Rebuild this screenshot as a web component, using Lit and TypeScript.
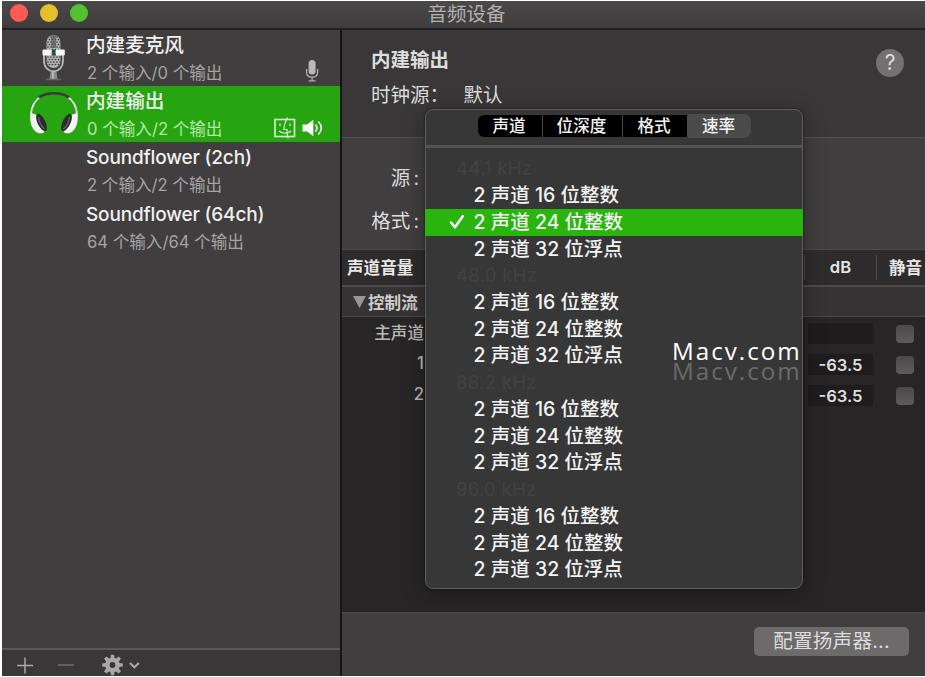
import { LitElement, html, svg, css, nothing } from "lit";
import { customElement, property } from "lit/decorators.js";
import { classMap } from "lit/directives/class-map.js";

const baseText = css`
  * {
    box-sizing: border-box;
  }
  :host {
    font-family: Inter, "Noto Sans CJK SC", sans-serif;
    white-space: nowrap;
  }
  svg {
    display: block;
    flex: none;
  }
`;

interface Device {
  name: string;
  detail: string;
  art?: "mic" | "headphones";
  badges?: "input" | "output";
  selected?: boolean;
  latin?: boolean;
}

const devices: Device[] = [
  { name: "内建麦克风", detail: "2 个输入/0 个输出", art: "mic", badges: "input" },
  { name: "内建输出", detail: "0 个输入/2 个输出", art: "headphones", badges: "output", selected: true },
  { name: "Soundflower (2ch)", detail: "2 个输入/2 个输出", latin: true },
  { name: "Soundflower (64ch)", detail: "64 个输入/64 个输出", latin: true },
];

const rates = ["44.1 kHz", "48.0 kHz", "88.2 kHz", "96.0 kHz"];
const formats = ["2 声道 16 位整数", "2 声道 24 位整数", "2 声道 32 位浮点"];
const tabs = ["声道", "位深度", "格式", "速率"];

const meshDots = Array.from({ length: 12 }, (_, r) =>
  Array.from({ length: 7 }, (_, c) => ({ x: 3 + c * 3 + (r % 2) * 1.5, y: 3 + r * 2.5 }))
).flat();

const studioMic = html`<svg width="24" height="48" viewBox="0 0 24 48">
  <defs>
    <clipPath id="capsule"><rect x="4.5" y="1" width="14" height="33" rx="7" /></clipPath>
  </defs>
  <rect x="4.5" y="1" width="14" height="33" rx="7" fill="#b4b4b4" />
  <g clip-path="url(#capsule)" fill="#3d3d3d">
    ${meshDots.map((d) => svg`<circle cx=${d.x} cy=${d.y} r="0.85" />`)}
    <rect x="9" y="0" width="5" height="14" fill="#4a4a4a" opacity=".55" />
  </g>
  <path d="M2 21v6c0 6 4 10 9.500 10.500C17 37 21 33 21 27v-6" fill="none" stroke="#b9b9b9" stroke-width="1.800" />
  <rect x=".5" y="15.500" width="9" height="6" rx="1" fill="#f6f6f6" />
  <rect x="13.800" y="15.500" width="9" height="6" rx="1" fill="#f6f6f6" />
  <rect x="10" y="15.500" width="3.400" height="6" fill="#2e4a4d" />
  <path d="M8.500 38h6l1 7h-8z" fill="#8b8b8b" />
  <path d="M11 38v7" stroke="#ddd" stroke-width="1" />
  <path d="M4 45.500h15" stroke="#666" stroke-width="1.500" />
</svg>`;

const headphones = html`<svg width="50" height="44" viewBox="0 0 50 44">
  <path d="M4 33C-1.500 18 6 2.500 25 2.300 44 2.500 51.500 18 46 33" fill="none" stroke="#f4f4f4" stroke-width="1.700" />
  <path d="M10 6.500C18 1 32 1 40 6.500" fill="none" stroke="#3b3b3b" stroke-width="2.800" />
  <path d="M2 22c-1.500 7-.5 13 3.500 17.500 3 3.500 8 3.500 10 1.500L8 24z" fill="#f5f5f5" />
  <path d="M48 22c1.500 7 .5 13-3.500 17.500-3 3.500-8 3.500-10 1.500L42 24z" fill="#f5f5f5" />
  <ellipse cx="12.500" cy="31.500" rx="3.900" ry="9.500" transform="rotate(-26 12.500 31.500)" fill="#2b2b2b" />
  <ellipse cx="37.500" cy="31.500" rx="3.900" ry="9.500" transform="rotate(26 37.500 31.500)" fill="#2b2b2b" />
  <path d="M9.500 26c.5 5 2.500 9 6 12M40.500 26c-.5 5-2.500 9-6 12" stroke="#686868" stroke-width="1.200" fill="none" />
</svg>`;

const smallMic = html`<svg width="14" height="24" viewBox="0 0 14 24">
  <rect x="3.600" y="1" width="7" height="14.500" rx="3.500" fill="#b9b8b8" />
  <path d="M1.600 10v3c0 3.500 2.300 5.200 5.500 5.200s5.500-1.700 5.500-5.200v-3M7.100 18v3.600M3.600 21.800h7" fill="none" stroke="#b1b0b0" stroke-width="1.300" />
</svg>`;

const finderIcon = html`<svg width="22" height="22" viewBox="0 0 22 22" fill="none" stroke="#d9f7d2">
  <rect x="1" y="2.500" width="19.500" height="17" stroke-width="1.600" />
  <path d="M13.500 0.500C11 5 10 8.500 9.800 12.500h3.200c-.2 3 .2 6 1.200 9" stroke-width="1.100" />
  <path d="M6 6.500v2.500M16 6.500v2.500M5 14c3.500 3 8.500 3 12 0" stroke-width="1.200" />
</svg>`;

const speaker = html`<svg width="22" height="18" viewBox="0 0 22 18">
  <path d="M.5 5.500h4.700L11.300.8v16.400L5.200 12.500H.5z" fill="#fff" />
  <path d="M13.700 6c1.600 1.800 1.600 4.200 0 6M16.600 3c3.600 3.600 3.600 8.400 0 12" fill="none" stroke="#fff" stroke-width="1.600" stroke-linecap="round" />
</svg>`;

@customElement("device-row")
class DeviceRow extends LitElement {
  @property({ attribute: false }) device!: Device;

  static styles = [
    baseText,
    css`
      :host {
        display: block;
      }
      .row {
        height: 56.2px;
        display: grid;
        grid-template-columns: 84px 1fr auto;
        color: #f1f0f0;
      }
      .selected {
        background: #26a510;
      }
      .art {
        display: flex;
        justify-content: center;
        padding: 4px 0 0 19px;
      }
      .selected .art {
        padding-top: 5px;
      }
      .words {
        padding-top: 2px;
      }
      .name {
        font-size: 19.6px;
        line-height: 27px;
        font-weight: 500;
      }
      .latin {
        font-size: 19px;
        letter-spacing: -0.17px;
      }
      .detail {
        font-size: 16.6px;
        line-height: 28px;
        color: #a5a3a4;
        padding-left: 1px;
      }
      .selected .detail {
        color: #b5e8ab;
      }
      .badges {
        display: flex;
        align-items: flex-end;
        gap: 6px;
        padding: 0 16px 4px 0;
      }
      .input {
        padding: 0 21px 4px 0;
      }
      .speaker {
        padding-bottom: 2px;
      }
    `,
  ];

  render() {
    const d = this.device;
    return html`<div class=${classMap({ row: true, selected: !!d.selected })}>
      <div class="art">${d.art === "mic" ? studioMic : d.art === "headphones" ? headphones : nothing}</div>
      <div class="words">
        <div class=${classMap({ name: true, latin: !!d.latin })}>${d.name}</div>
        <div class="detail">${d.detail}</div>
      </div>
      ${d.badges === "input"
        ? html`<div class="badges input">${smallMic}</div>`
        : d.badges === "output"
          ? html`<div class="badges">${finderIcon}<span class="speaker">${speaker}</span></div>`
          : nothing}
    </div>`;
  }
}

@customElement("format-menu")
class FormatMenu extends LitElement {
  static styles = [
    baseText,
    css`
      :host {
        display: block;
        width: 378px;
        height: 480px;
        border: 1.5px solid #5d5f5e;
        border-radius: 8px;
        background: #373737;
        box-shadow: 0 4px 22px rgba(0, 0, 0, 0.35), 0 0 2px rgba(0, 0, 0, 0.7);
        color: #f3f3f3;
      }
      .tabs {
        height: 38px;
        padding: 4px 0 0 52px;
        border-bottom: 3px solid #535353;
        display: flex;
      }
      .tab {
        height: 22px;
        margin-top: 1px;
        background: #000;
        border-right: 1px solid #4c4c4c;
        width: 65px;
        padding-right: 2px;
        font-size: 16.6px;
        line-height: 22px;
        font-weight: 500;
        text-align: center;
      }
      .tab:first-child {
        border-radius: 6px 0 0 6px;
      }
      .tab:nth-child(2) {
        width: 80px;
      }
      .tab:last-child {
        width: 63px;
        height: 24px;
        margin-top: 0;
        line-height: 24px;
        background: #4b4b4b;
        border: 0;
        border-radius: 0 7px 7px 0;
      }
      .list {
        padding-top: 7.300px;
      }
      .rate,
      .format {
        height: 26.740px;
        line-height: 26.740px;
      }
      .rate {
        padding-left: 30px;
        color: #424242;
        font-size: 18.5px;
        letter-spacing: 0.3px;
      }
      .format {
        display: flex;
        font-size: 19.5px;
        font-weight: 500;
      }
      .mark {
        width: 47.500px;
        padding: 5px 0 0 23px;
      }
      .chosen {
        background: #29b40e;
        margin: 0 -1px;
        padding-left: 1px;
      }
    `,
  ];

  render() {
    return html`
      <div class="tabs">${tabs.map((t) => html`<div class="tab">${t}</div>`)}</div>
      <div class="list">
        ${rates.map(
          (rate, i) => html`
            <div class="rate">${rate}</div>
            ${formats.map((f, j) => {
              const chosen = i === 0 && j === 1;
              return html`<div class=${classMap({ format: true, chosen })}>
                <span class="mark"
                  >${chosen
                    ? html`<svg width="16" height="16" viewBox="0 0 16 16">
                        <path d="M2 8.500l4 4.800L13.800 2.300" fill="none" stroke="#fff" stroke-width="2.500" stroke-linecap="round" stroke-linejoin="round" />
                      </svg>`
                    : nothing}</span
                >${f}
              </div>`;
            })}
          `
        )}
      </div>
    `;
  }
}

@customElement("app-root")
class AppRoot extends LitElement {
  static styles = [
    baseText,
    css`
      :host {
        display: block;
        position: relative;
        width: 925px;
        height: 677px;
        padding: 1px 0 1px 2px;
        box-sizing: border-box;
        background: #fff;
        overflow: hidden;
        color: #dedddd;
      }
      .window {
        height: 675px;
        display: flex;
        flex-direction: column;
        background: #403e3f;
      }
      .titlebar {
        height: 29px;
        flex: none;
        display: grid;
        grid-template-columns: 1fr auto 1fr;
        background: linear-gradient(#4a4848, #3e3c3d);
        border-bottom: 2px solid #232122;
      }
      .lights {
        display: flex;
        gap: 12px;
        padding: 3px 0 0 8px;
      }
      .light {
        width: 18px;
        height: 18px;
        border-radius: 50%;
      }
      .close {
        background: #fe5b54;
      }
      .minimize {
        background: #e6bf2c;
      }
      .maximize {
        background: #53c22e;
      }
      .title {
        font-size: 19.5px;
        line-height: 26px;
        color: #b3b1b2;
        padding-left: 6px;
      }
      .body {
        flex: 1;
        display: flex;
        min-height: 0;
      }
      .sidebar {
        width: 340px;
        flex: none;
        display: flex;
        flex-direction: column;
        border-right: 2px solid #151314;
      }
      .devices {
        flex: 1;
      }
      .tools {
        height: 28px;
        border-top: 2px solid #5a5859;
        background: #393738;
      }
      .main {
        flex: 1;
        min-width: 0;
        display: flex;
        flex-direction: column;
      }
      .summary {
        height: 108px;
        background: #393738;
        border-bottom: 1px solid #525051;
        display: flex;
        justify-content: space-between;
        padding: 17px 21px 0 29px;
      }
      .heading {
        font-size: 19.5px;
        font-weight: 600;
        line-height: 26px;
      }
      .clock {
        font-size: 19.5px;
        line-height: 26px;
        padding-top: 9px;
        display: flex;
      }
      .clock-label {
        width: 92.500px;
      }
      .help {
        width: 28px;
        height: 28px;
        margin-top: 2px;
        border-radius: 50%;
        background: #737172;
        text-align: center;
        font-size: 21px;
        line-height: 28px;
      }
      .fields {
        height: 111px;
        width: 77px;
        padding-top: 27px;
        font-size: 19.5px;
        line-height: 26px;
        text-align: right;
        display: flex;
        flex-direction: column;
        gap: 17px;
      }
      .colon {
        margin-left: 3px;
      }
      .head {
        height: 38px;
        background: #2d2b2c;
        border-top: 1px solid #4c4a4b;
        border-bottom: 2px solid #4d4b4c;
        display: grid;
        grid-template-columns: 462px 73px 48px;
        align-items: center;
        font-size: 16.6px;
        font-weight: 700;
        color: #e8e7e7;
      }
      .head-name {
        padding: 0 0 2px 5px;
      }
      .head-db {
        text-align: center;
        border-left: 1px solid #4c4a4b;
        border-right: 1px solid #4c4a4b;
        line-height: 25px;
        font-weight: 600;
      }
      .head-mute {
        padding: 0 0 2px 12px;
      }
      .group {
        height: 30px;
        background: #353334;
        border-bottom: 1px solid #4a4849;
        display: flex;
        align-items: center;
        gap: 2px;
        padding-left: 11px;
        font-size: 16.6px;
        font-weight: 700;
        color: #cfcece;
      }
      .channels {
        flex: 1;
        padding-top: 1px;
        background: #272526;
      }
      .channel {
        height: 31.200px;
        display: grid;
        grid-template-columns: 82px 65px 18px;
        justify-content: start;
        align-items: center;
        font-size: 16.6px;
        font-weight: 500;
      }
      .channel-name {
        text-align: right;
        color: #b9b8b8;
        padding-bottom: 3px;
      }
      .level {
        margin-left: 384px;
        width: 65px;
        height: 21px;
        line-height: 22px;
        background: #1e1c1d;
        text-align: center;
        font-weight: 600;
      }
      .box {
        margin-left: 407px;
        width: 18px;
        height: 18px;
        border-radius: 4px;
        background: linear-gradient(#4b494a, #5d5b5c);
      }
      .footer {
        height: 64px;
        border-top: 1px solid #4c4a4b;
        display: flex;
        justify-content: flex-end;
        padding: 14px 16px 0 0;
      }
      .configure {
        width: 155px;
        height: 29px;
        border-radius: 5px;
        background: #6c6a6b;
        font-size: 19.6px;
        line-height: 29px;
        text-align: center;
        letter-spacing: 0.2px;
      }
      .popover {
        position: absolute;
        left: 425px;
        top: 109px;
      }
      .watermark {
        position: absolute;
        left: 672px;
        top: 341px;
        font-family: "Open Sans", sans-serif;
        font-size: 24.200px;
        line-height: 20px;
        letter-spacing: 2px;
        color: #fff;
      }
      .echo {
        color: #6b6b6b;
      }
    `,
  ];

  render() {
    const teeth = Array.from({ length: 8 }, (_, i) => i * 45);
    return html`
      <div class="window">
        <div class="titlebar">
          <div class="lights">
            <div class="light close"></div>
            <div class="light minimize"></div>
            <div class="light maximize"></div>
          </div>
          <div class="title">音频设备</div>
        </div>
        <div class="body">
          <div class="sidebar">
            <div class="devices">${devices.map((d) => html`<device-row .device=${d}></device-row>`)}</div>
            <div class="tools">
              <svg width="160" height="26" viewBox="0 0 160 26" fill="none">
                <path d="M15 15.500h16M23 7.500v16" stroke="#aaa8a9" stroke-width="1.500" />
                <path d="M56 15h16" stroke="#706e6f" stroke-width="1.500" />
                <g transform="translate(110.500 15)">
                  ${teeth.map((a) => svg`<path d="M-2.300-5L-1.600-10.300h3.200L2.300-5z" fill="#aaa8a9" transform="rotate(${a})" />`)}
                  <circle r="5.100" stroke="#aaa8a9" stroke-width="4.400" />
                </g>
                <path d="M128 13l4.400 4.300 4.400-4.300" stroke="#aaa8a9" stroke-width="2.100" />
              </svg>
            </div>
          </div>
          <div class="main">
            <div class="summary">
              <div>
                <div class="heading">内建输出</div>
                <div class="clock"><span class="clock-label">时钟源：</span><span>默认</span></div>
              </div>
              <div class="help">?</div>
            </div>
            <div class="fields">
              <div>源<span class="colon">:</span></div>
              <div>格式<span class="colon">:</span></div>
            </div>
            <div class="head">
              <div class="head-name">声道音量</div>
              <div class="head-db">dB</div>
              <div class="head-mute">静音</div>
            </div>
            <div class="group">
              <svg width="13" height="12" viewBox="0 0 13 12"><path d="M0 0h13L6.500 12z" fill="#979596" /></svg>
              <span>控制流</span>
            </div>
            <div class="channels">
              ${[
                ["主声道", ""],
                ["1", "-63.5"],
                ["2", "-63.5"],
              ].map(
                ([name, level]) => html`<div class="channel">
                  <div class="channel-name">${name}</div>
                  <div class="level">${level}</div>
                  <div class="box"></div>
                </div>`
              )}
            </div>
            <div class="footer"><div class="configure">配置扬声器...</div></div>
          </div>
        </div>
      </div>
      <format-menu class="popover"></format-menu>
      <div class="watermark">
        <div>Macv.com</div>
        <div class="echo">Macv.com</div>
      </div>
    `;
  }
}
